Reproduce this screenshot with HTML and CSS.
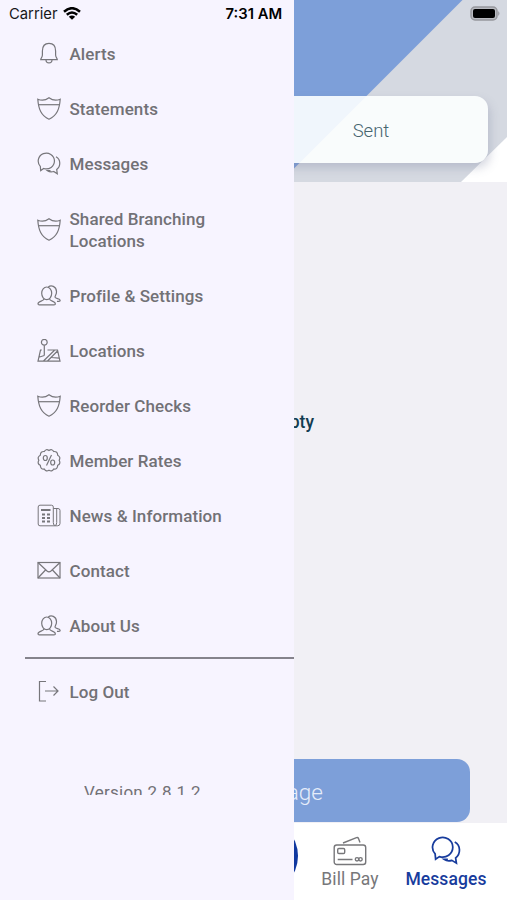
FILE: index.html
```html
<!DOCTYPE html>
<html lang="en">
<head>
    <meta charset="UTF-8">
    <meta name="viewport" content="width=device-width, initial-scale=1.0">
    <title>Messages</title>
    <link rel="stylesheet" href="styles.css">
</head>
<body>
    <!-- shared icon shapes -->
    <svg class="sprite" width="0" height="0">
        <symbol id="shield" viewBox="0 0 24 24">
            <path d="M0.800 2.200C4.500 3.800 8 3.800 12 0.800C16 3.800 19.500 3.800 23.200 2.200C22.500 12 20 18.500 12 22.200C4 18.500 1.500 12 0.800 2.200Z"/>
            <path d="M1.800 7.700H22.200"/>
        </symbol>
        <symbol id="chat" viewBox="0 0 24 24">
            <path d="M3.700 18.600L3.300 14.300A8.100 7.900 0 1 1 6.700 16.500Z"/>
            <path d="M19 4.800C24 7.500 23.800 14.500 19.700 17.500L20.300 21.700L16.700 19.500C14.500 20.200 12.200 19.900 10.500 18.700H13.500"/>
        </symbol>
        <symbol id="people" viewBox="0 0 24 24">
            <ellipse cx="9.700" cy="9.300" rx="5" ry="6.300"/>
            <path d="M7 14.800C7 17.500 1 16.800 1 19.800Q1 20.900 2.300 20.900H17Q18.400 20.900 18.300 19.800C18.300 16.800 12.500 17.500 12.500 14.800"/>
            <path d="M11.300 3C14 0.800 19.200 2 19.500 7.500C19.700 10.500 18 11.500 18 13.200C18.300 15 23.200 14.300 23.200 16.500Q23.200 17.400 20 17.400"/>
        </symbol>
    </svg>

    <div class="phone">
        <main class="screen">
            <header class="header">
                <svg class="header-bg" viewBox="0 0 507 182" preserveAspectRatio="none">
                    <path d="M0 0H462.500L280.500 182H0Z" fill="#7d9fd9"/>
                    <path d="M507 137V182H461Z" fill="#fff"/>
                </svg>
                <div class="tabs">
                    <span class="tab">Sent</span>
                </div>
            </header>
            <div class="content">
                <p class="empty">Empty</p>
                <button class="new-message">Message</button>
            </div>
            <nav class="tab-bar">
                <span class="tab-circle"></span>
                <a class="tab-item bill-pay">
                    <svg viewBox="0 0 34 30">
                        <rect x="1.200" y="9" width="31.500" height="19.500" rx="2.500"/>
                        <rect x="4.700" y="12.500" width="7" height="5" rx="1.200"/>
                        <path d="M4.700 23.500H19.500M10 7L23.500 1.700Q25 1.200 25.500 2.500L27 6.500"/>
                        <circle cx="24" cy="23.300" r="1.700"/>
                        <circle cx="27.500" cy="23.300" r="1.700"/>
                    </svg>
                    <span>Bill Pay</span>
                </a>
                <a class="tab-item active">
                    <svg><use href="#chat"/></svg>
                    <span>Messages</span>
                </a>
            </nav>
        </main>

        <aside class="drawer">
            <ul class="menu">
                <li class="menu-item">
                    <svg class="icon" viewBox="0 0 24 24"><path d="M3.700 17.700C3.700 16 5.400 15.500 5.400 13V9C5.400 4 8 1.400 12 1.400S18.600 4 18.600 9V13C18.600 15.500 20.300 16 20.300 17.700Z"/><path d="M9 17.700C9 22 15 22 15 17.700"/></svg>
                    <span>Alerts</span>
                </li>
                <li class="menu-item">
                    <svg class="icon"><use href="#shield"/></svg>
                    <span>Statements</span>
                </li>
                <li class="menu-item">
                    <svg class="icon"><use href="#chat"/></svg>
                    <span>Messages</span>
                </li>
                <li class="menu-item">
                    <svg class="icon"><use href="#shield"/></svg>
                    <span>Shared Branching<br>Locations</span>
                </li>
                <li class="menu-item">
                    <svg class="icon"><use href="#people"/></svg>
                    <span>Profile &amp; Settings</span>
                </li>
                <li class="menu-item">
                    <svg class="icon" viewBox="0 0 24 24"><circle cx="7.300" cy="3.300" r="2.900"/><path d="M7.300 6.200V16.500M4.800 11H3.500L1 22.200H23L20.500 11H10.500M1.800 18.200L7.300 16.500M6.500 22L17.500 11.200M10.500 22L20.500 12M14.500 18.500L22 19.200"/></svg>
                    <span>Locations</span>
                </li>
                <li class="menu-item">
                    <svg class="icon"><use href="#shield"/></svg>
                    <span>Reorder Checks</span>
                </li>
                <li class="menu-item">
                    <svg class="icon" viewBox="0 0 24 24"><path d="M12 1.500Q15 -0.500 16.700 2.500Q20.600 2.200 20.700 6.200Q24 8 22.200 11.200Q24 14.700 20.700 16.300Q20.600 20.500 16.700 20Q15 23 12 21.200Q9 23 7.300 20Q3.400 20.500 3.300 16.300Q0 14.700 1.800 11.200Q0 8 3.300 6.200Q3.400 2.200 7.300 2.500Q9 -0.500 12 1.500Z"/><path d="M14.500 6L9.500 16.500"/><ellipse cx="8.300" cy="9" rx="2" ry="2.500"/><ellipse cx="15.700" cy="13.500" rx="2" ry="2.500"/></svg>
                    <span>Member Rates</span>
                </li>
                <li class="menu-item">
                    <svg class="icon news" viewBox="0 0 24 24"><path d="M16.300 18.500V3Q16.300 1.200 14.500 1.200H3Q1.200 1.200 1.200 3V20Q1.200 21.800 3 21.800H20.500Q23 21.800 23 19.500V6.500Q23 4.500 21 4.500H16.300M16.300 18.500Q16.300 21.500 18 21.500Q19.700 21.500 19.700 18.500V4.500"/><path class="thick" d="M4 6H13.500M5 10.500H8M10 10.500H13M5 14H8M10 14H13M5 17.500H8M10 17.500H13"/></svg>
                    <span>News &amp; Information</span>
                </li>
                <li class="menu-item">
                    <svg class="icon" viewBox="0 0 24 24"><rect x="1" y="3.500" width="22" height="15.500"/><path d="M1 3.500L10 12Q12 13.800 14 12L23 3.500M1 19L8.500 11M23 19L15.500 11"/></svg>
                    <span>Contact</span>
                </li>
                <li class="menu-item">
                    <svg class="icon"><use href="#people"/></svg>
                    <span>About Us</span>
                </li>
            </ul>
            <hr class="divider">
            <div class="menu-item">
                <svg class="icon" viewBox="0 0 24 24"><path d="M9 1.500H2.500V21H9M8 11H20.500M16.500 6.500L21 11L16.500 15.500"/></svg>
                <span>Log Out</span>
            </div>
            <div class="version">Version 2.8.1.2</div>
        </aside>

        <div class="status-bar">
            <span class="carrier">Carrier</span>
            <svg class="wifi" viewBox="0 0 18 13">
                <path d="M1 4.700Q9 -2.300 17 4.700M3.800 7.700Q9 3.300 14.200 7.700"/>
                <path class="fill" d="M9 12.800L5.800 9.700Q9 7.300 12.200 9.700Z"/>
            </svg>
            <span class="time">7:31 AM</span>
            <svg class="battery" viewBox="0 0 31 15">
                <rect x="1" y="1" width="26" height="13" rx="4" fill="#b9bbc1" stroke="#97989d" stroke-width="1.500"/>
                <rect x="3" y="3" width="22" height="9" rx="2" fill="#000"/>
                <path d="M28.300 5Q30.500 7.500 28.300 10Z" fill="#8d8e93"/>
            </svg>
        </div>
    </div>
</body>
</html>
```
FILE: styles.css
```css
body {
    margin: 0;
    font-family: Roboto, 'Liberation Sans', sans-serif;
}

.sprite {
    position: absolute;
}

.phone {
    position: relative;
    width: 507px;
    height: 900px;
    overflow: hidden;
    background-color: #f1f0f5;
}

.screen {
    height: 100%;
    display: flex;
    flex-direction: column;
}

.header {
    position: relative;
    height: 182px;
    box-sizing: border-box;
    padding: 96px 19.5px 0;
    background-color: #d5d9e1;
}

.header-bg {
    position: absolute;
    inset: 0;
    width: 100%;
    height: 100%;
}

.tabs {
    position: relative;
    height: 67px;
    display: flex;
    justify-content: flex-end;
    background-color: rgba(253, 255, 255, 0.9);
    border-radius: 13px;
    box-shadow: 2px 5px 10px rgba(120, 125, 155, 0.3);
}

.tab {
    width: 233px;
    line-height: 70px;
    text-align: center;
    font-size: 18.5px;
    font-weight: 350;
    color: #47656f;
}

.content {
    flex: 1;
    display: flex;
    flex-direction: column;
    justify-content: space-between;
    padding: 229px 37px 1px;
}

.empty {
    margin: 0;
    width: 277px;
    text-align: right;
    line-height: 22px;
    font-size: 17.5px;
    font-weight: 500;
    color: #123c50;
}

.new-message {
    height: 63px;
    padding: 2px 147px 0 0;
    border: none;
    border-radius: 13px;
    background-color: #7d9fd9;
    color: #e6edfa;
    text-align: right;
    font-family: inherit;
    font-size: 22.5px;
    font-weight: 300;
}

.tab-bar {
    height: 77px;
    display: flex;
    justify-content: flex-end;
    background-color: #fff;
}

.tab-circle {
    width: 76px;
    height: 76px;
    margin: -5px 4px 0 0;
    border-radius: 50%;
    background-color: #1038a0;
}

.tab-item {
    width: 96px;
    display: flex;
    flex-direction: column;
    align-items: center;
    font-size: 17.5px;
    line-height: 22px;
    letter-spacing: 0.1px;
    color: #77777a;
}

.tab-item svg {
    width: 34px;
    height: 30px;
    margin: 13px 0 2px;
    fill: none;
    stroke: currentColor;
    stroke-width: 1.4;
}

.tab-item.active {
    margin-right: 13px;
    font-weight: 500;
    color: #183c9d;
}

.drawer {
    position: absolute;
    top: 0;
    left: 0;
    width: 294px;
    height: 100%;
    box-sizing: border-box;
    padding-top: 26px;
    background-color: #f7f4ff;
    color: #727176;
}

.menu {
    list-style: none;
    margin: 0;
    padding: 0;
}

.menu-item {
    display: flex;
    align-items: center;
    gap: 9px;
    padding: 16.5px 20px 16.5px 36.5px;
    font-size: 17px;
    font-weight: 500;
    line-height: 22px;
    letter-spacing: 0.08px;
}

.icon {
    flex: none;
    width: 24px;
    height: 24px;
    margin: -1px 0;
    fill: none;
    stroke: #77767b;
    stroke-width: 1.2;
}

.news {
    stroke-width: 1;
}

.thick {
    stroke-width: 1.8;
}

.divider {
    height: 2px;
    margin: 4px 0 5.5px 25px;
    border: none;
    background-color: #85838c;
}

.version {
    height: 14px;
    margin: 61.5px 0 0 84px;
    overflow: hidden;
    font-size: 17px;
    line-height: 23px;
    letter-spacing: 0.25px;
}

.status-bar {
    position: absolute;
    top: 0;
    left: 0;
    width: 100%;
    height: 27px;
    box-sizing: border-box;
    padding: 0 6px 0 9px;
    display: flex;
    align-items: center;
    font-family: Inter, 'Liberation Sans', sans-serif;
    font-size: 14.8px;
    color: #17171a;
}

.wifi {
    width: 18px;
    height: 13px;
    margin: 0 145px 0 5px;
    fill: none;
    stroke: #000;
    stroke-width: 2.5;
}

.wifi .fill {
    fill: #000;
    stroke: none;
}

.time {
    font-weight: 600;
    color: #000;
}

.battery {
    width: 31px;
    height: 15px;
    margin-left: auto;
}
```
